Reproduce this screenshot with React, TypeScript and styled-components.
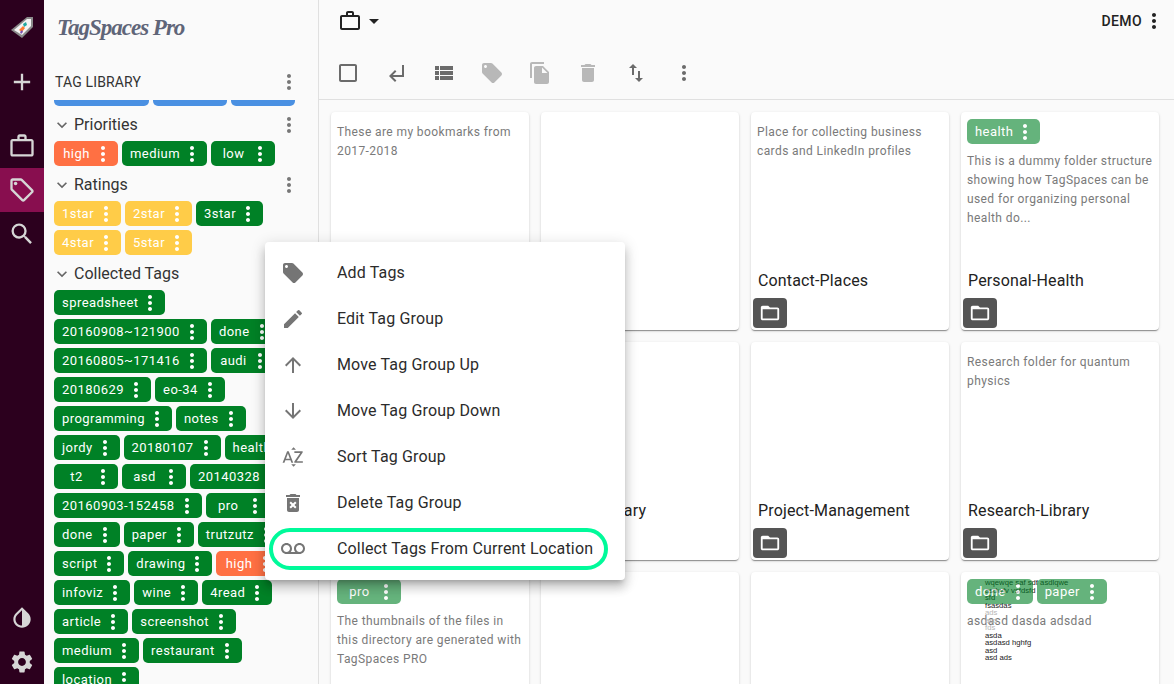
import React, { ReactNode } from 'react';
import styled, { createGlobalStyle } from 'styled-components';
import {
  MdAdd,
  MdArrowDownward,
  MdArrowDropDown,
  MdArrowUpward,
  MdCheckBoxOutlineBlank,
  MdDelete,
  MdDeleteForever,
  MdEdit,
  MdExpandMore,
  MdFileCopy,
  MdFolderOpen,
  MdInvertColors,
  MdLocalOffer,
  MdMoreVert,
  MdOutlineLocalOffer,
  MdSearch,
  MdSettings,
  MdSortByAlpha,
  MdSubdirectoryArrowLeft,
  MdSwapVert,
  MdViewList,
  MdVoicemail,
  MdWorkOutline,
} from 'react-icons/md';

const GREEN = '#008126';
const ORANGE = '#ff7043';
const YELLOW = '#ffcc48';

const GlobalStyle = createGlobalStyle`
  html, body, #root {
    margin: 0;
    height: 100%;
    overflow: hidden;
  }
  body {
    font-family: Roboto, "Liberation Sans", sans-serif;
    background: #fafafa;
  }
  * {
    box-sizing: border-box;
  }
`;

const Page = styled.div`
  display: flex;
  width: 1174px;
  height: 684px;
  position: relative;
  overflow: hidden;
`;

const Rail = styled.nav`
  width: 44px;
  flex: none;
  display: flex;
  flex-direction: column;
  background: #2c001e;
  color: #d6d6d6;
`;

const RailLogo = styled.div`
  height: 60px;
  display: flex;
  align-items: flex-start;
  padding: 15px 0 0 10px;
`;

const RailButton = styled.div<{ $active?: boolean }>`
  height: 44px;
  display: flex;
  align-items: center;
  justify-content: center;
  background: ${(p) => (p.$active ? '#880e4f' : 'transparent')};
`;

const RailGroup = styled.div`
  margin-top: 20px;
  flex: 1;
`;

const Sidebar = styled.aside`
  width: 275px;
  flex: none;
  padding-left: 10px;
  background: #fafafa;
  border-right: 1px solid #e0e0e0;
  overflow: hidden;
`;

const Brand = styled.div`
  height: 60px;
  padding: 13px 0 0 3px;
  font-family: "Liberation Serif", serif;
  font-style: italic;
  font-weight: 700;
  font-size: 23px;
  line-height: 30px;
  letter-spacing: -1px;
  color: #5f6578;
`;

const LibraryHeader = styled.div`
  height: 40px;
  display: flex;
  align-items: center;
  justify-content: space-between;
  padding: 4px 17px 0 1px;
  font-size: 14px;
  letter-spacing: 0.15px;
  color: #333;
  text-transform: uppercase;
  svg {
    color: #777;
  }
`;

const StubRow = styled.div`
  display: flex;
  gap: 4px;
`;

const Stub = styled.div<{ $width: number }>`
  width: ${(p) => p.$width}px;
  height: 6px;
  background: #4a90e2;
  border-radius: 0 0 5px 5px;
`;

const GroupHeader = styled.div`
  height: 35px;
  display: flex;
  align-items: center;
  padding: 2px 17px 0 0;
  font-size: 16px;
  color: #333;
  svg:first-child {
    margin: 0 2px 0 -2px;
    color: #666;
  }
  svg:last-child {
    margin-left: auto;
    color: #777;
  }
`;

const ChipList = styled.div`
  display: flex;
  flex-wrap: wrap;
  gap: 4px;
  width: 248px;
`;

const Chip = styled.div<{ $color: string; $faded?: boolean }>`
  height: 25px;
  flex: none;
  display: inline-flex;
  align-items: center;
  padding: 0 3px 0 8px;
  border-radius: 5px;
  background: ${(p) => p.$color};
  opacity: ${(p) => (p.$faded ? 0.6 : 1)};
  color: #fff;
  font-size: 13px;
  font-weight: 400;
  letter-spacing: 0.45px;
  white-space: nowrap;
`;

const ChipLabel = styled.span`
  min-width: 29px;
  text-align: center;
`;

const Main = styled.main`
  flex: 1;
  min-width: 0;
  display: flex;
  flex-direction: column;
`;

const Header = styled.header`
  height: 100px;
  flex: none;
  border-bottom: 1px solid #e0e0e0;
`;

const TopRow = styled.div`
  height: 42px;
  display: flex;
  align-items: center;
  padding: 0 8px 0 19px;
  color: #222;
  font-size: 14px;
  font-weight: 500;
  letter-spacing: 0.4px;
`;

const DemoLabel = styled.span`
  margin-left: auto;
`;

const ToolRow = styled.div`
  height: 48px;
  margin-top: 7px;
  display: flex;
  padding-left: 5px;
`;

const ToolButton = styled.div<{ $disabled?: boolean }>`
  width: 48px;
  display: flex;
  align-items: center;
  justify-content: center;
  color: ${(p) => (p.$disabled ? '#b8b8b8' : '#6b6b6b')};
`;

const CardGrid = styled.div`
  display: grid;
  grid-template-columns: repeat(4, 198px);
  grid-auto-rows: 218px;
  gap: 12px;
  padding: 12px;
  overflow: hidden;
`;

const Card = styled.article`
  position: relative;
  display: flex;
  flex-direction: column;
  background: #fff;
  border-radius: 4px;
  box-shadow: 0 2px 1px -1px rgba(0, 0, 0, 0.25), 0 1px 1px rgba(0, 0, 0, 0.16), 0 1px 3px rgba(0, 0, 0, 0.14);
`;

const CardTags = styled.div`
  position: relative;
  display: flex;
  gap: 4px;
  padding: 7px 6px 0;
  margin-bottom: -3px;
`;

const CardText = styled.p`
  flex: 1;
  margin: 0;
  padding: 10.5px 4px 0 6px;
  font-size: 12px;
  line-height: 19px;
  letter-spacing: 0.4px;
  color: #7a7a7a;
`;

const CardTitle = styled.div`
  height: 22px;
  margin-bottom: 6px;
  padding-left: 7px;
  font-size: 16px;
  line-height: 22px;
  letter-spacing: 0.15px;
  color: #222;
  white-space: nowrap;
`;

const FolderButton = styled.div`
  width: 34px;
  height: 30px;
  margin: 0 0 2px 2px;
  display: flex;
  align-items: center;
  justify-content: center;
  background: #555;
  border-radius: 4px;
  color: #fff;
`;

const Thumbnail = styled.div`
  position: absolute;
  top: 7px;
  left: 24px;
  font-family: "Liberation Sans", sans-serif;
  font-size: 7.7px;
  line-height: 7.5px;
  color: #222;
  white-space: nowrap;
`;

const ThumbFaint = styled.div`
  color: #b5b5b5;
`;

const Menu = styled.ul`
  position: absolute;
  left: 265px;
  top: 242px;
  width: 360px;
  margin: 0;
  padding: 8px 0;
  list-style: none;
  background: #fff;
  border-radius: 4px;
  box-shadow: 0 5px 5px -3px rgba(0, 0, 0, 0.2), 0 8px 10px 1px rgba(0, 0, 0, 0.14), 0 3px 14px 2px rgba(0, 0, 0, 0.12);
`;

const MenuItem = styled.li`
  position: relative;
  height: 46px;
  display: flex;
  align-items: center;
  padding-left: 16px;
  font-size: 16px;
  color: #2b2b2b;
  svg {
    flex: none;
    margin-right: 32px;
    color: #757575;
  }
`;

const MenuLabel = styled.span`
  padding-bottom: 2px;
  letter-spacing: 0.15px;
`;

const Highlight = styled.span`
  position: absolute;
  inset: 2px 17px 2px 4px;
  border: 4px solid #00fa9a;
  border-radius: 21px;
`;

const Tag = ({ label, color = GREEN, faded }: { label: string; color?: string; faded?: boolean }) => (
  <Chip $color={color} $faded={faded}>
    <ChipLabel>{label}</ChipLabel>
    <MdMoreVert size={24} />
  </Chip>
);

const Group = ({ title }: { title: string }) => (
  <GroupHeader>
    <MdExpandMore size={20} />
    {title}
    <MdMoreVert size={24} />
  </GroupHeader>
);

const FolderCard = ({ title, tags, text, children }: { title?: string; tags?: string[]; text?: string; children?: ReactNode }) => (
  <Card>
    {children}
    {tags && (
      <CardTags>
        {tags.map((t) => (
          <Tag key={t} label={t} faded />
        ))}
      </CardTags>
    )}
    <CardText>{text}</CardText>
    <CardTitle>{title}</CardTitle>
    <FolderButton>
      <MdFolderOpen size={22} />
    </FolderButton>
  </Card>
);

const collected: [string, string?][] = [
  ['spreadsheet'],
  ['20160908~121900'],
  ['done'],
  ['20160805~171416'],
  ['audi'],
  ['20180629'],
  ['eo-34'],
  ['programming'],
  ['notes'],
  ['jordy'],
  ['20180107'],
  ['health'],
  ['t2'],
  ['asd'],
  ['20140328'],
  ['20160903-152458'],
  ['pro'],
  ['done'],
  ['paper'],
  ['trutzutz'],
  ['script'],
  ['drawing'],
  ['high', ORANGE],
  ['infoviz'],
  ['wine'],
  ['4read'],
  ['article'],
  ['screenshot'],
  ['medium'],
  ['restaurant'],
  ['location'],
];

const menuItems = [
  { icon: <MdLocalOffer size={24} />, label: 'Add Tags' },
  { icon: <MdEdit size={24} />, label: 'Edit Tag Group' },
  { icon: <MdArrowUpward size={24} />, label: 'Move Tag Group Up' },
  { icon: <MdArrowDownward size={24} />, label: 'Move Tag Group Down' },
  { icon: <MdSortByAlpha size={24} />, label: 'Sort Tag Group' },
  { icon: <MdDeleteForever size={24} />, label: 'Delete Tag Group' },
];

const LogoMark = () => (
  <svg width="26" height="26" viewBox="0 0 26 26">
    <path d="M1 15 L17 2 H23 V12 L12 23 Z" fill="#8a8a8a" />
    <path d="M4 15 L17 4 H21 V11 L12 20 Z" fill="#f4f4f4" />
    <path d="M9 15 L13 11 L15 13 L12 17 Z" fill="#ff7a30" />
    <path d="M13 9 L16 7 L17 10 L14 12 Z" fill="#20a8a0" />
    <path d="M10 17 L12 15 L13 17 L11 19 Z" fill="#7a4fb0" />
  </svg>
);

const App = () => (
  <Page>
    <GlobalStyle />
    <Rail>
      <RailLogo>
        <LogoMark />
      </RailLogo>
      <RailButton>
        <MdAdd size={28} />
      </RailButton>
      <RailGroup>
        <RailButton>
          <MdWorkOutline size={28} />
        </RailButton>
        <RailButton $active>
          <MdOutlineLocalOffer size={28} />
        </RailButton>
        <RailButton>
          <MdSearch size={28} />
        </RailButton>
      </RailGroup>
      <RailButton>
        <MdInvertColors size={26} />
      </RailButton>
      <RailButton>
        <MdSettings size={26} />
      </RailButton>
    </Rail>

    <Sidebar>
      <Brand>TagSpaces Pro</Brand>
      <LibraryHeader>
        Tag Library
        <MdMoreVert size={24} />
      </LibraryHeader>
      <StubRow>
        <Stub $width={95} />
        <Stub $width={74} />
        <Stub $width={64} />
      </StubRow>
      <Group title="Priorities" />
      <ChipList>
        <Tag label="high" color={ORANGE} />
        <Tag label="medium" />
        <Tag label="low" />
      </ChipList>
      <Group title="Ratings" />
      <ChipList>
        <Tag label="1star" color={YELLOW} />
        <Tag label="2star" color={YELLOW} />
        <Tag label="3star" />
        <Tag label="4star" color={YELLOW} />
        <Tag label="5star" color={YELLOW} />
      </ChipList>
      <Group title="Collected Tags" />
      <ChipList>
        {collected.map(([label, color], i) => (
          <Tag key={i} label={label} color={color} />
        ))}
      </ChipList>
    </Sidebar>

    <Main>
      <Header>
        <TopRow>
          <MdWorkOutline size={24} />
          <MdArrowDropDown size={24} />
          <DemoLabel>DEMO</DemoLabel>
          <MdMoreVert size={24} />
        </TopRow>
        <ToolRow>
          <ToolButton>
            <MdCheckBoxOutlineBlank size={24} />
          </ToolButton>
          <ToolButton>
            <MdSubdirectoryArrowLeft size={24} />
          </ToolButton>
          <ToolButton>
            <MdViewList size={24} />
          </ToolButton>
          <ToolButton $disabled>
            <MdLocalOffer size={24} />
          </ToolButton>
          <ToolButton $disabled>
            <MdFileCopy size={24} />
          </ToolButton>
          <ToolButton $disabled>
            <MdDelete size={24} />
          </ToolButton>
          <ToolButton>
            <MdSwapVert size={24} />
          </ToolButton>
          <ToolButton>
            <MdMoreVert size={24} />
          </ToolButton>
        </ToolRow>
      </Header>
      <CardGrid>
        <FolderCard text="These are my bookmarks from 2017-2018" />
        <FolderCard />
        <FolderCard title="Contact-Places" text="Place for collecting business cards and LinkedIn profiles" />
        <FolderCard
          title="Personal-Health"
          tags={['health']}
          text="This is a dummy folder structure showing how TagSpaces can be used for organizing personal health do..."
        />
        <FolderCard />
        <FolderCard title="Music-Library" />
        <FolderCard title="Project-Management" />
        <FolderCard title="Research-Library" text="Research folder for quantum physics" />
        <FolderCard tags={['pro']} text="The thumbnails of the files in this directory are generated with TagSpaces PRO" />
        <FolderCard />
        <FolderCard />
        <FolderCard tags={['done', 'paper']} text="asdasd dasda adsdad">
          <Thumbnail>
            <div>wqewqe saf sdf asdlqwe</div>
            <div>asdwfv vsfdsfd</div>
            <div>sfd</div>
            <div>fsasdas</div>
            <ThumbFaint>ads</ThumbFaint>
            <ThumbFaint>asd</ThumbFaint>
            <ThumbFaint>fds</ThumbFaint>
            <div>asda</div>
            <div>asdasd hghfg</div>
            <div>asd</div>
            <div>asd ads</div>
          </Thumbnail>
        </FolderCard>
      </CardGrid>
    </Main>

    <Menu>
      {menuItems.map((item) => (
        <MenuItem key={item.label}>
          {item.icon}
          <MenuLabel>{item.label}</MenuLabel>
        </MenuItem>
      ))}
      <MenuItem>
        <MdVoicemail size={24} />
        <MenuLabel>Collect Tags From Current Location</MenuLabel>
        <Highlight />
      </MenuItem>
    </Menu>
  </Page>
);

export default App;
